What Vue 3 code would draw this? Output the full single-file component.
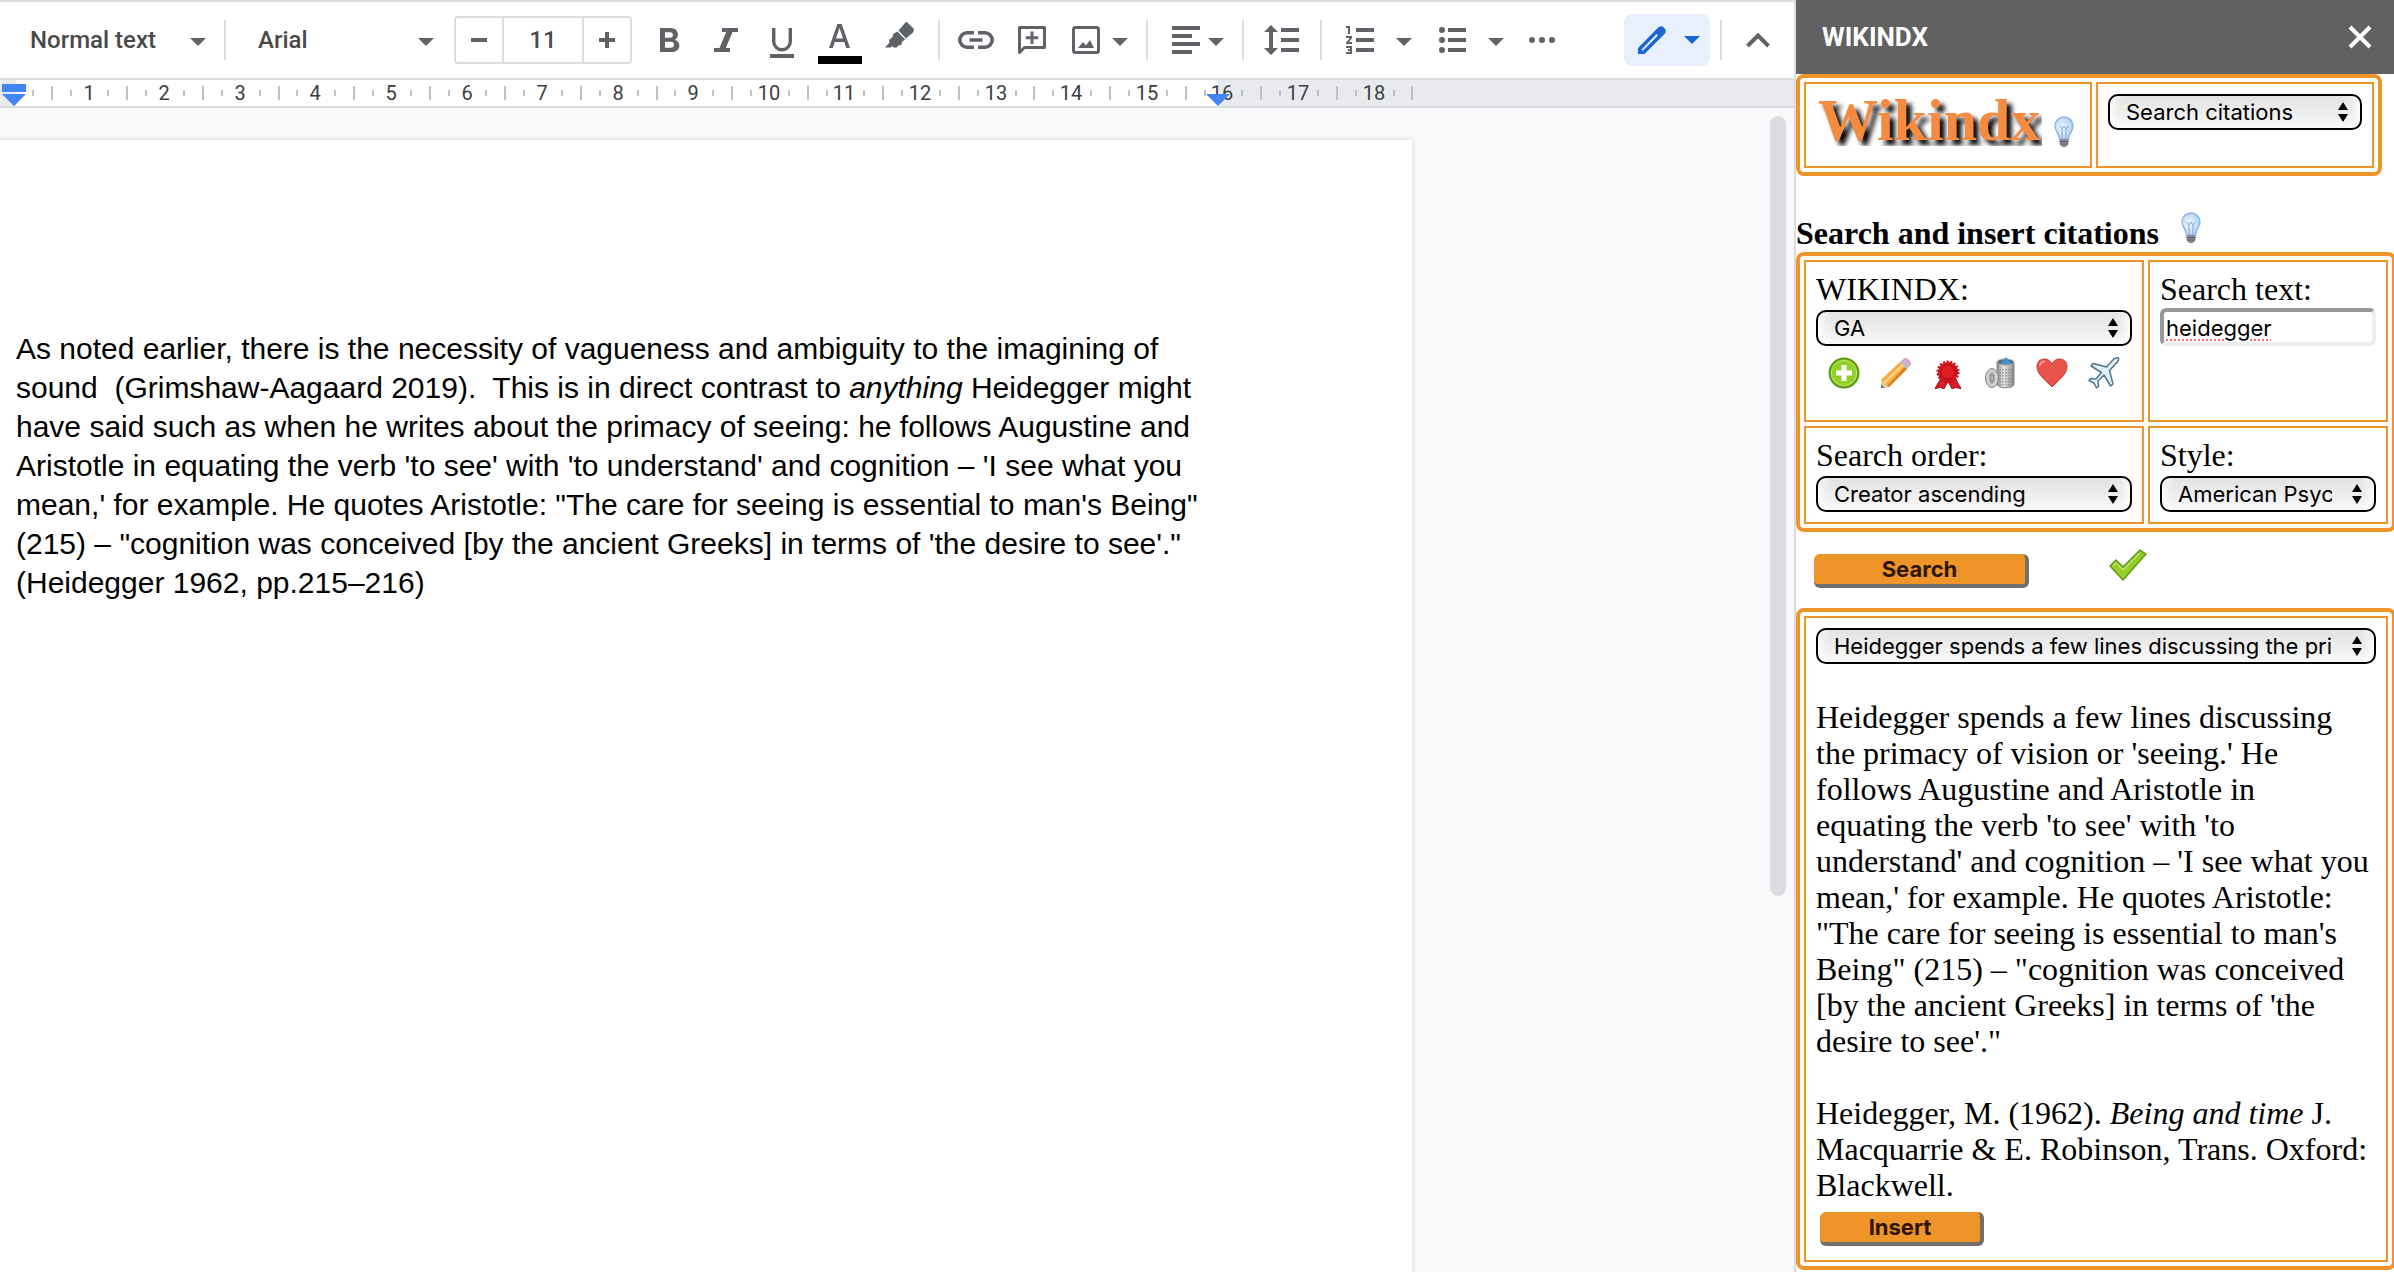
<script setup>
import { ref } from 'vue'

const CM = 75.59
const ORIGIN = 14
const at = (cm) => Math.round(ORIGIN + cm * CM)

const numbers = Array.from({ length: 18 }, (_, i) => ({ n: i + 1, x: at(i + 1) - 1 }))
const halfTicks = Array.from({ length: 19 }, (_, i) => at(i + 0.5))
const quarterTicks = Array.from({ length: 37 }, (_, i) => at(i / 2 + 0.25)).filter((x) => x < 1410)

const zoomSize = ref('11')
const mode = ref('Search citations')
const source = ref('GA')
const query = ref('heidegger')
const order = ref('Creator ascending')
const citationStyle = ref('American Psychological Association (APA)')
const quote = ref('Heidegger spends a few lines discussing the primacy of vision')
</script>

<template>
  <div class="app">
    <main class="editor">
      <div class="toolbar" role="toolbar" aria-label="Formatting">
        <button class="drop drop-style">Normal text<i class="caret"></i></button>
        <span class="sep"></span>
        <button class="drop drop-font">Arial<i class="caret"></i></button>
        <div class="size">
          <button aria-label="Decrease font size">
            <svg width="16" height="16" viewBox="0 0 16 16"><path d="M0 6h16v4H0z" fill="#5f6368" /></svg>
          </button>
          <input v-model="zoomSize" aria-label="Font size" />
          <button aria-label="Increase font size">
            <svg width="16" height="16" viewBox="0 0 16 16"><path d="M0 6h6V0h4v6h6v4h-6v6H6v-6H0z" fill="#5f6368" /></svg>
          </button>
        </div>
        <button class="tool t-bold" aria-label="Bold">
          <svg width="20" height="24" viewBox="0 0 20 24"><path fill="#5f6368" fill-rule="evenodd" d="M0 0h10.500C15 0 18 2.800 18 6.600c0 2.300-1.200 4.200-3 5.100 2.700.9 4.400 3 4.400 5.700C19.400 21.300 16.300 24 12 24H0zM5 4.300v5.400h5c1.800 0 2.900-1.100 2.900-2.700S11.800 4.300 10 4.300zM5 13.800v5.900h5.800c2 0 3.200-1.200 3.200-3s-1.200-2.900-3.200-2.900z" /></svg>
        </button>
        <button class="tool t-italic" aria-label="Italic">
          <svg width="24" height="24" viewBox="0 0 24 24"><path fill="#5f6368" d="M8 0h16v4h-5.500L11.800 20H16v4H0v-4h5.500L12.200 4H8z" /></svg>
        </button>
        <button class="tool t-under" aria-label="Underline">
          <svg width="24" height="30" viewBox="0 0 24 30"><path fill="none" stroke="#5f6368" stroke-width="3.400" d="M3.700 0v13.500a8.300 8.300 0 0 0 16.600 0V0" /><path fill="#5f6368" d="M0 26h24v4H0z" /></svg>
        </button>
        <button class="tool t-color" aria-label="Text colour">
          <svg width="44" height="40" viewBox="0 0 44 40"><path fill="#5f6368" fill-rule="evenodd" d="M19.300 0h4.400L32 24h-3.800l-2-6H16.700l-2 6H11zM18 14.500h7L21.500 4z" /><path d="M0 32h44v8H0z" /></svg>
        </button>
        <button class="tool t-mark" aria-label="Highlight colour">
          <svg width="30" height="26" viewBox="0 0 30 26"><path fill="#5f6368" d="M22 0l7 7-.5 3-7.500 6.500-7.500-8L20.500.5zM12.300 9.500l8 8-3 2-1 3.500-3 .5-1.600 2H8.500L7.300 24 5.500 25.500H0l4.500-5L4 18l3.500-3 .8-3z" /></svg>
        </button>
        <span class="sep"></span>
        <button class="tool t-link" aria-label="Insert link">
          <svg width="36" height="18" viewBox="0 0 36 18"><path fill="none" stroke="#5f6368" stroke-width="3.600" d="M16 1.800H9a7.200 7.200 0 0 0 0 14.400h7M20 1.800h7a7.200 7.200 0 0 1 0 14.400h-7M11.500 9h13" /></svg>
        </button>
        <button class="tool t-comment" aria-label="Add comment">
          <svg width="28" height="28" viewBox="0 0 28 28"><path fill="none" stroke="#5f6368" stroke-width="3" stroke-linejoin="round" d="M1.500 1.500h25v20H6.500l-5 5z" /><path fill="#5f6368" d="M12.500 5.500h3v4.700h4.700v3h-4.700V18h-3v-4.800H7.800v-3h4.700z" /></svg>
        </button>
        <button class="tool t-image" aria-label="Insert image">
          <svg width="28" height="28" viewBox="0 0 28 28"><rect x="1.500" y="1.500" width="25" height="25" rx="2" fill="none" stroke="#5f6368" stroke-width="3" /><path fill="#5f6368" d="M6 22l5-6 3 3.500L18 14l4 8z" /></svg>
          <i class="caret"></i>
        </button>
        <span class="sep"></span>
        <button class="tool t-align" aria-label="Align">
          <svg width="28" height="28" viewBox="0 0 28 28"><path fill="#5f6368" d="M0 0h28v4H0zM0 8h20v4H0zM0 16h28v4H0zM0 24h20v4H0z" /></svg>
          <i class="caret"></i>
        </button>
        <span class="sep"></span>
        <button class="tool t-line" aria-label="Line spacing">
          <svg width="36" height="30" viewBox="0 0 36 30"><path fill="#5f6368" d="M7 0l7 7H9v16h5l-7 7-7-7h5V7H0zM17 3h18v4H17zM17 13h18v4H17zM17 23h18v4H17z" /></svg>
        </button>
        <span class="sep"></span>
        <button class="tool t-num" aria-label="Numbered list">
          <svg width="28" height="28" viewBox="0 0 28 28"><path fill="#5f6368" d="M10 2h18v4H10zM10 12h18v4H10zM10 22h18v4H10z" /><path fill="none" stroke="#5f6368" stroke-width="2" d="M0 1h3v7M0 11h5v1L1 17h5M0 21h5v6H0M2 24h3" /></svg>
          <i class="caret"></i>
        </button>
        <button class="tool t-bullet" aria-label="Bulleted list">
          <svg width="28" height="28" viewBox="0 0 28 28"><path fill="#5f6368" d="M9 2h18v4H9zM9 12h18v4H9zM9 22h18v4H9z" /><circle cx="3" cy="4" r="3" fill="#5f6368" /><circle cx="3" cy="14" r="3" fill="#5f6368" /><circle cx="3" cy="24" r="3" fill="#5f6368" /></svg>
          <i class="caret"></i>
        </button>
        <button class="tool t-more" aria-label="More">
          <svg width="26" height="6" viewBox="0 0 26 6"><circle cx="3" cy="3" r="3" fill="#5f6368" /><circle cx="13" cy="3" r="3" fill="#5f6368" /><circle cx="23" cy="3" r="3" fill="#5f6368" /></svg>
        </button>
        <button class="mode" aria-label="Editing mode">
          <svg width="28" height="28" viewBox="0 0 28 28"><path fill="#1967d2" fill-rule="evenodd" d="M0 22L20.500 1.300a4 4 0 0 1 5 0l1.300 1.400a4 4 0 0 1 0 5L6.500 28H0zM3.800 23.200v1.300h1.300L20 9.500 18.500 8z" /></svg>
          <i class="caret"></i>
        </button>
        <span class="sep"></span>
        <button class="tool t-hide" aria-label="Hide menus">
          <svg width="24" height="16" viewBox="0 0 24 16"><path fill="none" stroke="#5f6368" stroke-width="4" d="M1.500 14L12 3.500 22.500 14" /></svg>
        </button>
      </div>

      <div class="ruler">
        <svg class="ruler-svg" height="26" aria-hidden="true">
          <rect x="0" y="0" width="16" height="26" fill="#e8eaed" />
          <rect x="1218" y="0" width="100%" height="26" fill="#e8eaed" />
          <rect v-for="x in halfTicks" :key="'h' + x" :x="x - 1" y="6" width="2" height="14" fill="#bdc1c6" />
          <rect v-for="x in quarterTicks" :key="'q' + x" :x="x - 1" y="10" width="2" height="6" fill="#bdc1c6" />
          <text v-for="m in numbers" :key="m.n" :x="m.x" y="20" text-anchor="middle" class="ruler-num">{{ m.n }}</text>
          <path d="M2 4h24v8H2zM2 14h24L14 26z" fill="#4285f4" />
          <path d="M1206 14h24l-12 12z" fill="#4285f4" />
        </svg>
      </div>

      <div class="canvas">
        <article class="page">
          <p>
            As noted earlier, there is the necessity of vagueness and ambiguity to the imagining of<br />
            sound&nbsp; (Grimshaw-Aagaard 2019).&nbsp; This is in direct contrast to <em>anything</em> Heidegger might<br />
            have said such as when he writes about the primacy of seeing: he follows Augustine and<br />
            Aristotle in equating the verb 'to see' with 'to understand' and cognition – 'I see what you<br />
            mean,' for example. He quotes Aristotle: "The care for seeing is essential to man's Being"<br />
            (215) – "cognition was conceived [by the ancient Greeks] in terms of 'the desire to see'."<br />
            (Heidegger 1962, pp.215–216)
          </p>
        </article>
        <div class="scrollbar"></div>
      </div>
    </main>

    <aside class="sidebar">
      <header class="side-head">
        <h1>WIKINDX</h1>
        <button aria-label="Close">
          <svg width="24" height="24" viewBox="0 0 24 24"><path d="M2 2l20 20M22 2L2 22" stroke="#fff" stroke-width="4" /></svg>
        </button>
      </header>

      <svg class="defs" width="0" height="0" aria-hidden="true">
        <defs>
          <radialGradient id="glass" cx=".4" cy=".5" r=".6">
            <stop offset="0" stop-color="#f4faff" />
            <stop offset="1" stop-color="#a9cff6" />
          </radialGradient>
          <linearGradient id="metal" x1="0" x2="1">
            <stop offset="0" stop-color="#8f8f8f" />
            <stop offset=".4" stop-color="#e6e6e6" />
            <stop offset="1" stop-color="#8a8a8a" />
          </linearGradient>
          <linearGradient id="leaf" x1="0" y1="0" x2="0" y2="1">
            <stop offset="0" stop-color="#8fc41e" />
            <stop offset="1" stop-color="#9ad32c" />
          </linearGradient>
          <symbol id="bulb" viewBox="0 0 20 32">
            <path d="M10 1c5 0 9 3.800 9 9 0 5-4 7-4.500 13h-9C5 17 1 15 1 10c0-5.200 4-9 9-9z" fill="url(#glass)" stroke="#86b4e6" stroke-width="1.300" />
            <path d="M6 10l2 3 2-3 2 3 2-3M8 13v9M12 13v9" fill="none" stroke="#7aa6d8" stroke-width="1" />
            <path d="M5.500 23h9v5l-2.500 3H8l-2.500-3z" fill="#8d8f94" />
            <path d="M5.500 25.500h9M6 28h8" stroke="#55585e" />
          </symbol>
        </defs>
      </svg>

      <section class="box box-top">
        <div class="cell brand-cell">
          <span class="brand">Wikindx</span>
          <svg class="bulb" width="20" height="32"><use href="#bulb" /></svg>
        </div>
        <div class="cell">
          <span class="pick">
            <select v-model="mode" aria-label="Mode"><option>Search citations</option></select>
            <svg width="12" height="20" viewBox="0 0 12 20"><path d="M6 0l5 8H1zM6 20l5-8H1z" /></svg>
          </span>
        </div>
      </section>

      <div class="title">
        <h2>Search and insert citations</h2>
        <svg width="20" height="32"><use href="#bulb" /></svg>
      </div>

      <section class="box box-wide box-form">
        <div class="cell cell-source">
          <label for="source">WIKINDX:</label>
          <span class="pick">
            <select id="source" v-model="source"><option>GA</option></select>
            <svg width="12" height="20" viewBox="0 0 12 20"><path d="M6 0l5 8H1zM6 20l5-8H1z" /></svg>
          </span>
          <div class="icons">
            <button aria-label="Add">
              <svg width="32" height="32" viewBox="0 0 32 32"><circle cx="16" cy="16" r="14.500" fill="#93cf2b" stroke="#5f9a1a" stroke-width="2" /><circle cx="16" cy="16" r="12.500" fill="none" stroke="#b7e45f" /><path d="M13.500 8h5v5.500H24v5h-5.500V24h-5v-5.500H8v-5h5.500z" fill="#fff" /></svg>
            </button>
            <button aria-label="Edit">
              <svg width="32" height="32" viewBox="0 0 32 32"><path d="M1 31V23L20 5l7 7L9 30z" fill="#f7a93b" /><path d="M3 25L22 7l2 2L5 27z" fill="#ffd083" /><path d="M7 29L25 10l2 2L9 30z" fill="#d97f1c" /><path d="M1 31v-8l8 7z" fill="#e6c79a" /><path d="M1 31v-3.500l3.500 3.500z" fill="#666" /><path d="M20 5l3-3 7 7-3 3z" fill="#b9bcc4" /><path d="M23 2c2-2 4-1 6 1s3 4 1 6z" fill="#dd9bd0" /></svg>
            </button>
            <button aria-label="Preferences">
              <svg width="32" height="32" viewBox="0 0 32 32"><path d="M9 21L3 31.500l5.500-1 3.500 1.500 4-8 4 8 3.500-1.500 5.500 1L23 21z" fill="#d81e26" stroke="#a50e15" /><circle cx="16" cy="15" r="10" fill="#d4141d" stroke="#c5121b" stroke-width="3" stroke-dasharray="2 1.500" /><circle cx="16" cy="15" r="7" fill="#e01c25" stroke="#b10c15" /></svg>
            </button>
            <button aria-label="Delete">
              <svg width="32" height="32" viewBox="0 0 32 32"><path d="M13 5h17v22c0 5-17 5-17 0z" fill="url(#metal)" stroke="#808080" /><ellipse cx="21.500" cy="5" rx="8.500" ry="3" fill="#666" stroke="#aaa" /><path d="M16 7l6-7 6 7z" fill="#3c93d6" /><path d="M16 12v16M19 12v17M22 12v17M25 12v17M28 12v16" stroke="#777" stroke-dasharray="1.500 1.500" /><ellipse cx="8" cy="21" rx="6.500" ry="9.500" fill="#c9c9c9" stroke="#858585" /><ellipse cx="8" cy="21" rx="4" ry="7" fill="#b2b2b2" stroke="#e2e2e2" /><path d="M7 18h2v6H7z" fill="#f2f2f2" stroke="#777" /></svg>
            </button>
            <button aria-label="Favourite">
              <svg width="32" height="32" viewBox="0 0 32 32"><path d="M16 30C8 22 1 17 1 9.500 1 5 4 2 8.500 2c3.500 0 6 2 7.500 5 1.500-3 4-5 7.500-5C28 2 31 5 31 9.500 31 17 24 22 16 30z" fill="#e8544a" stroke="#c23a32" /><path d="M4 9c0-3 2-4.500 5-4.500" fill="none" stroke="#f49a92" stroke-width="2" /></svg>
            </button>
            <button aria-label="Send">
              <svg width="32" height="32" viewBox="0 0 32 32"><path d="M30.500 1c-2-1-5 1-7 3.500L18.500 10 5 6.500 3 9l10.500 6.500L8 22l-5.500-.5L1 23.500l5 2.500 2.500 5 2-1.500L10 24l6-6 6.500 11 2.500-2-3.500-13.500 5.500-6C29.500 5.500 31 3 30.500 1z" fill="#e4f0fa" stroke="#4f7590" stroke-width="1.500" stroke-linejoin="round" /></svg>
            </button>
          </div>
        </div>
        <div class="cell">
          <label for="query">Search text:</label>
          <input id="query" v-model="query" class="query" type="text" spellcheck="false" />
        </div>
        <div class="cell">
          <label for="order">Search order:</label>
          <span class="pick">
            <select id="order" v-model="order"><option>Creator ascending</option></select>
            <svg width="12" height="20" viewBox="0 0 12 20"><path d="M6 0l5 8H1zM6 20l5-8H1z" /></svg>
          </span>
        </div>
        <div class="cell">
          <label for="cstyle">Style:</label>
          <span class="pick">
            <select id="cstyle" v-model="citationStyle"><option>American Psychological Association (APA)</option></select>
            <svg width="12" height="20" viewBox="0 0 12 20"><path d="M6 0l5 8H1zM6 20l5-8H1z" /></svg>
          </span>
        </div>
      </section>

      <div class="actions">
        <button class="push push-search">Search</button>
        <svg width="38" height="32" viewBox="0 0 38 32"><path d="M1 17l6-6 7 7L31 1l6 4-23 26z" fill="url(#leaf)" stroke="#5f9a1a" stroke-width="1.500" stroke-linejoin="round" /><path d="M4 17l3-3 7 7L31 4" fill="none" stroke="#bfe56a" stroke-width="1.500" /></svg>
      </div>

      <section class="box box-wide box-result">
        <div class="cell">
          <span class="pick">
            <select v-model="quote" aria-label="Citation"><option>Heidegger spends a few lines discussing the primacy of vision</option></select>
            <svg width="12" height="20" viewBox="0 0 12 20"><path d="M6 0l5 8H1zM6 20l5-8H1z" /></svg>
          </span>
          <p>
            Heidegger spends a few lines discussing the primacy of vision or 'seeing.' He follows
            Augustine and Aristotle in equating the verb 'to see' with 'to understand' and cognition –
            'I see what you mean,' for example. He quotes Aristotle: "The care for seeing is essential
            to man's Being" (215) – "cognition was conceived [by the ancient Greeks] in terms of 'the
            desire to see'."
          </p>
          <p>
            Heidegger, M. (1962). <em>Being and time</em> J. Macquarrie &amp; E. Robinson, Trans. Oxford:
            Blackwell.
          </p>
          <button class="push push-insert">Insert</button>
        </div>
      </section>
    </aside>
  </div>
</template>

<style>
body {
  margin: 0;
}
</style>

<style scoped>
* {
  box-sizing: border-box;
}
button {
  padding: 0;
  border: 0;
  background: none;
}
svg {
  display: block;
  flex: none;
}
h1,
h2,
p {
  margin: 0;
}
.app {
  display: flex;
  min-height: 100vh;
  background: #fff;
  overflow: hidden;
}

/* editor */
.editor {
  flex: 1;
  min-width: 0;
  display: flex;
  flex-direction: column;
  font-family: Roboto, sans-serif;
}
.toolbar {
  display: flex;
  align-items: center;
  height: 80px;
  border-top: 2px solid #dadce0;
  border-bottom: 2px solid #dadce0;
  padding-right: 24px;
}
.caret {
  border: 8px solid transparent;
  border-top-color: #5f6368;
  border-bottom: 0;
  margin-top: 4px;
}
.sep {
  width: 2px;
  height: 40px;
  background: #dadce0;
  flex: none;
}
.drop {
  display: flex;
  align-items: center;
  justify-content: space-between;
  font: 500 24px/30px Roboto, sans-serif;
  color: #4a4a4a;
}
.drop-style {
  width: 176px;
  margin: 0 18px 0 30px;
}
.drop-font {
  width: 176px;
  margin: 0 20px 0 32px;
}
.size {
  display: flex;
  width: 178px;
  height: 48px;
  border: 2px solid #dadce0;
  border-radius: 4px;
}
.size button {
  width: 46px;
  display: grid;
  place-items: center;
}
.size input {
  flex: 1;
  min-width: 0;
  padding: 0;
  border: solid #dadce0;
  border-width: 0 2px;
  text-align: center;
  font: 500 24px/30px Roboto, sans-serif;
  color: #4a4a4a;
}
.tool {
  display: flex;
  align-items: center;
}
.t-bold {
  margin-left: 28px;
}
.t-italic {
  margin-left: 34px;
}
.t-under {
  margin: 6px 0 0 32px;
}
.t-color {
  margin: 8px 0 0 24px;
}
.t-mark {
  margin: 0 23px 10px;
}
.t-link {
  margin: 0 24px 0 18px;
}
.t-image {
  gap: 12px;
  margin: 0 18px 0 26px;
}
.t-align {
  gap: 8px;
  margin: 0 18px 0 24px;
}
.t-line {
  margin: 0 20px;
}
.t-num {
  gap: 22px;
  margin: 0 27px 0 24px;
}
.t-bullet {
  gap: 21px;
}
.t-more {
  margin-left: 25px;
}
.mode {
  display: flex;
  align-items: center;
  justify-content: space-between;
  width: 86px;
  height: 52px;
  margin: 0 10px 0 auto;
  padding: 0 10px 0 14px;
  border-radius: 8px;
  background: #e8f0fe;
}
.mode .caret {
  border-top-color: #1967d2;
  margin-top: 0;
}
.t-hide {
  margin-left: 24px;
}
.ruler {
  height: 28px;
  border-bottom: 2px solid #dadce0;
}
.ruler-svg {
  width: 100%;
}
.ruler-num {
  font: 400 20px Roboto, sans-serif;
  fill: #3c4043;
}
.canvas {
  flex: 1;
  display: flex;
  justify-content: space-between;
  padding: 32px 8px 0 0;
  background: #f8f9fa;
}
.page {
  flex: 0 1 1412px;
  padding: 189px 0 0 16px;
  background: #fff;
  box-shadow: 0 0 6px rgba(60, 64, 67, 0.2);
  font: 30px/39px "Liberation Sans", Arial, sans-serif;
  color: #000;
  white-space: nowrap;
}
.scrollbar {
  width: 16px;
  height: 780px;
  margin-top: -24px;
  border-radius: 8px;
  background: #dadce0;
}

/* sidebar */
.sidebar {
  flex: none;
  width: 600px;
  border-left: 2px solid #dadce0;
  overflow: hidden;
  font: 32px/36px "Liberation Serif", "Times New Roman", serif;
  color: #000;
}
.defs {
  position: absolute;
}
.side-head {
  display: flex;
  align-items: center;
  justify-content: space-between;
  height: 74px;
  padding: 0 22px 0 26px;
  background: #616161;
}
.side-head h1 {
  font: 700 26px/30px Roboto, sans-serif;
  color: #fff;
}
.box {
  display: grid;
  gap: 4px;
  padding: 4px;
  border: 4px solid #ef9428;
  border-radius: 8px;
}
.box-top {
  grid-template-columns: 288fr 278fr;
  height: 102px;
  margin-right: 12px;
}
.box-wide {
  margin-right: -2px;
}
.box-form {
  grid-template-columns: 340fr 240fr;
}
.cell {
  min-width: 0;
  padding: 10px;
  border: 2px solid #ef9428;
  display: flex;
  flex-direction: column;
}
.cell-source {
  height: 162px;
}
.brand-cell {
  flex-direction: row;
  gap: 12px;
  align-items: flex-start;
}
.brand {
  width: 226px;
  height: 52px;
  padding-left: 2px;
  overflow: hidden;
  font-weight: 700;
  font-size: 60px;
  line-height: 52px;
  color: #f58b40;
  text-shadow: 5px 5px 5px #000;
}
.bulb {
  margin-top: 22px;
}
label {
  display: block;
  margin-bottom: 4px;
  line-height: 34px;
}
.pick {
  position: relative;
  display: block;
}
.pick svg {
  position: absolute;
  right: 13px;
  top: 8px;
  pointer-events: none;
}
select {
  display: block;
  width: 100%;
  height: 36px;
  padding: 0 42px 0 16px;
  appearance: none;
  border: 2px solid #000;
  border-radius: 10px;
  background: linear-gradient(#e2e2e2, #f8f8f8);
  box-shadow: inset 10px 0 8px -6px #fff, inset -10px 0 8px -6px #fff;
  font: 22px/28px Inter, sans-serif;
  color: #000;
}
.title {
  display: flex;
  gap: 22px;
  height: 40px;
  margin-top: 36px;
}
.title h2 {
  align-self: flex-end;
  font-size: 32px;
  line-height: 38px;
  font-weight: 700;
}
.icons {
  display: flex;
  gap: 20px;
  margin: 11px 0 0 12px;
}
.query {
  width: 100%;
  height: 38px;
  margin-top: -2px;
  padding: 2px 2px 0;
  border: 4px solid;
  border-color: #999 #eee #eee #999;
  border-radius: 6px;
  font: 22px/28px Inter, sans-serif;
  color: #000;
  text-decoration: underline dotted #f66 2px;
  text-underline-offset: 3px;
}
.actions {
  display: flex;
  gap: 80px;
  height: 76px;
  padding: 17px 0 0 18px;
}
.push {
  height: 34px;
  border: solid #707070;
  border-width: 0 4px 4px 0;
  border-radius: 6px;
  background: #ef9428;
  font: 700 22px/28px Inter, sans-serif;
  color: #2e1503;
}
.push-search {
  width: 215px;
  margin-top: 5px;
}
.push-insert {
  width: 164px;
  margin: 9px 0 4px 4px;
}
.box-result p {
  margin-top: 36px;
  padding-right: 5px;
}
.box-result .pick + p {
  margin-top: 35px;
}
</style>
